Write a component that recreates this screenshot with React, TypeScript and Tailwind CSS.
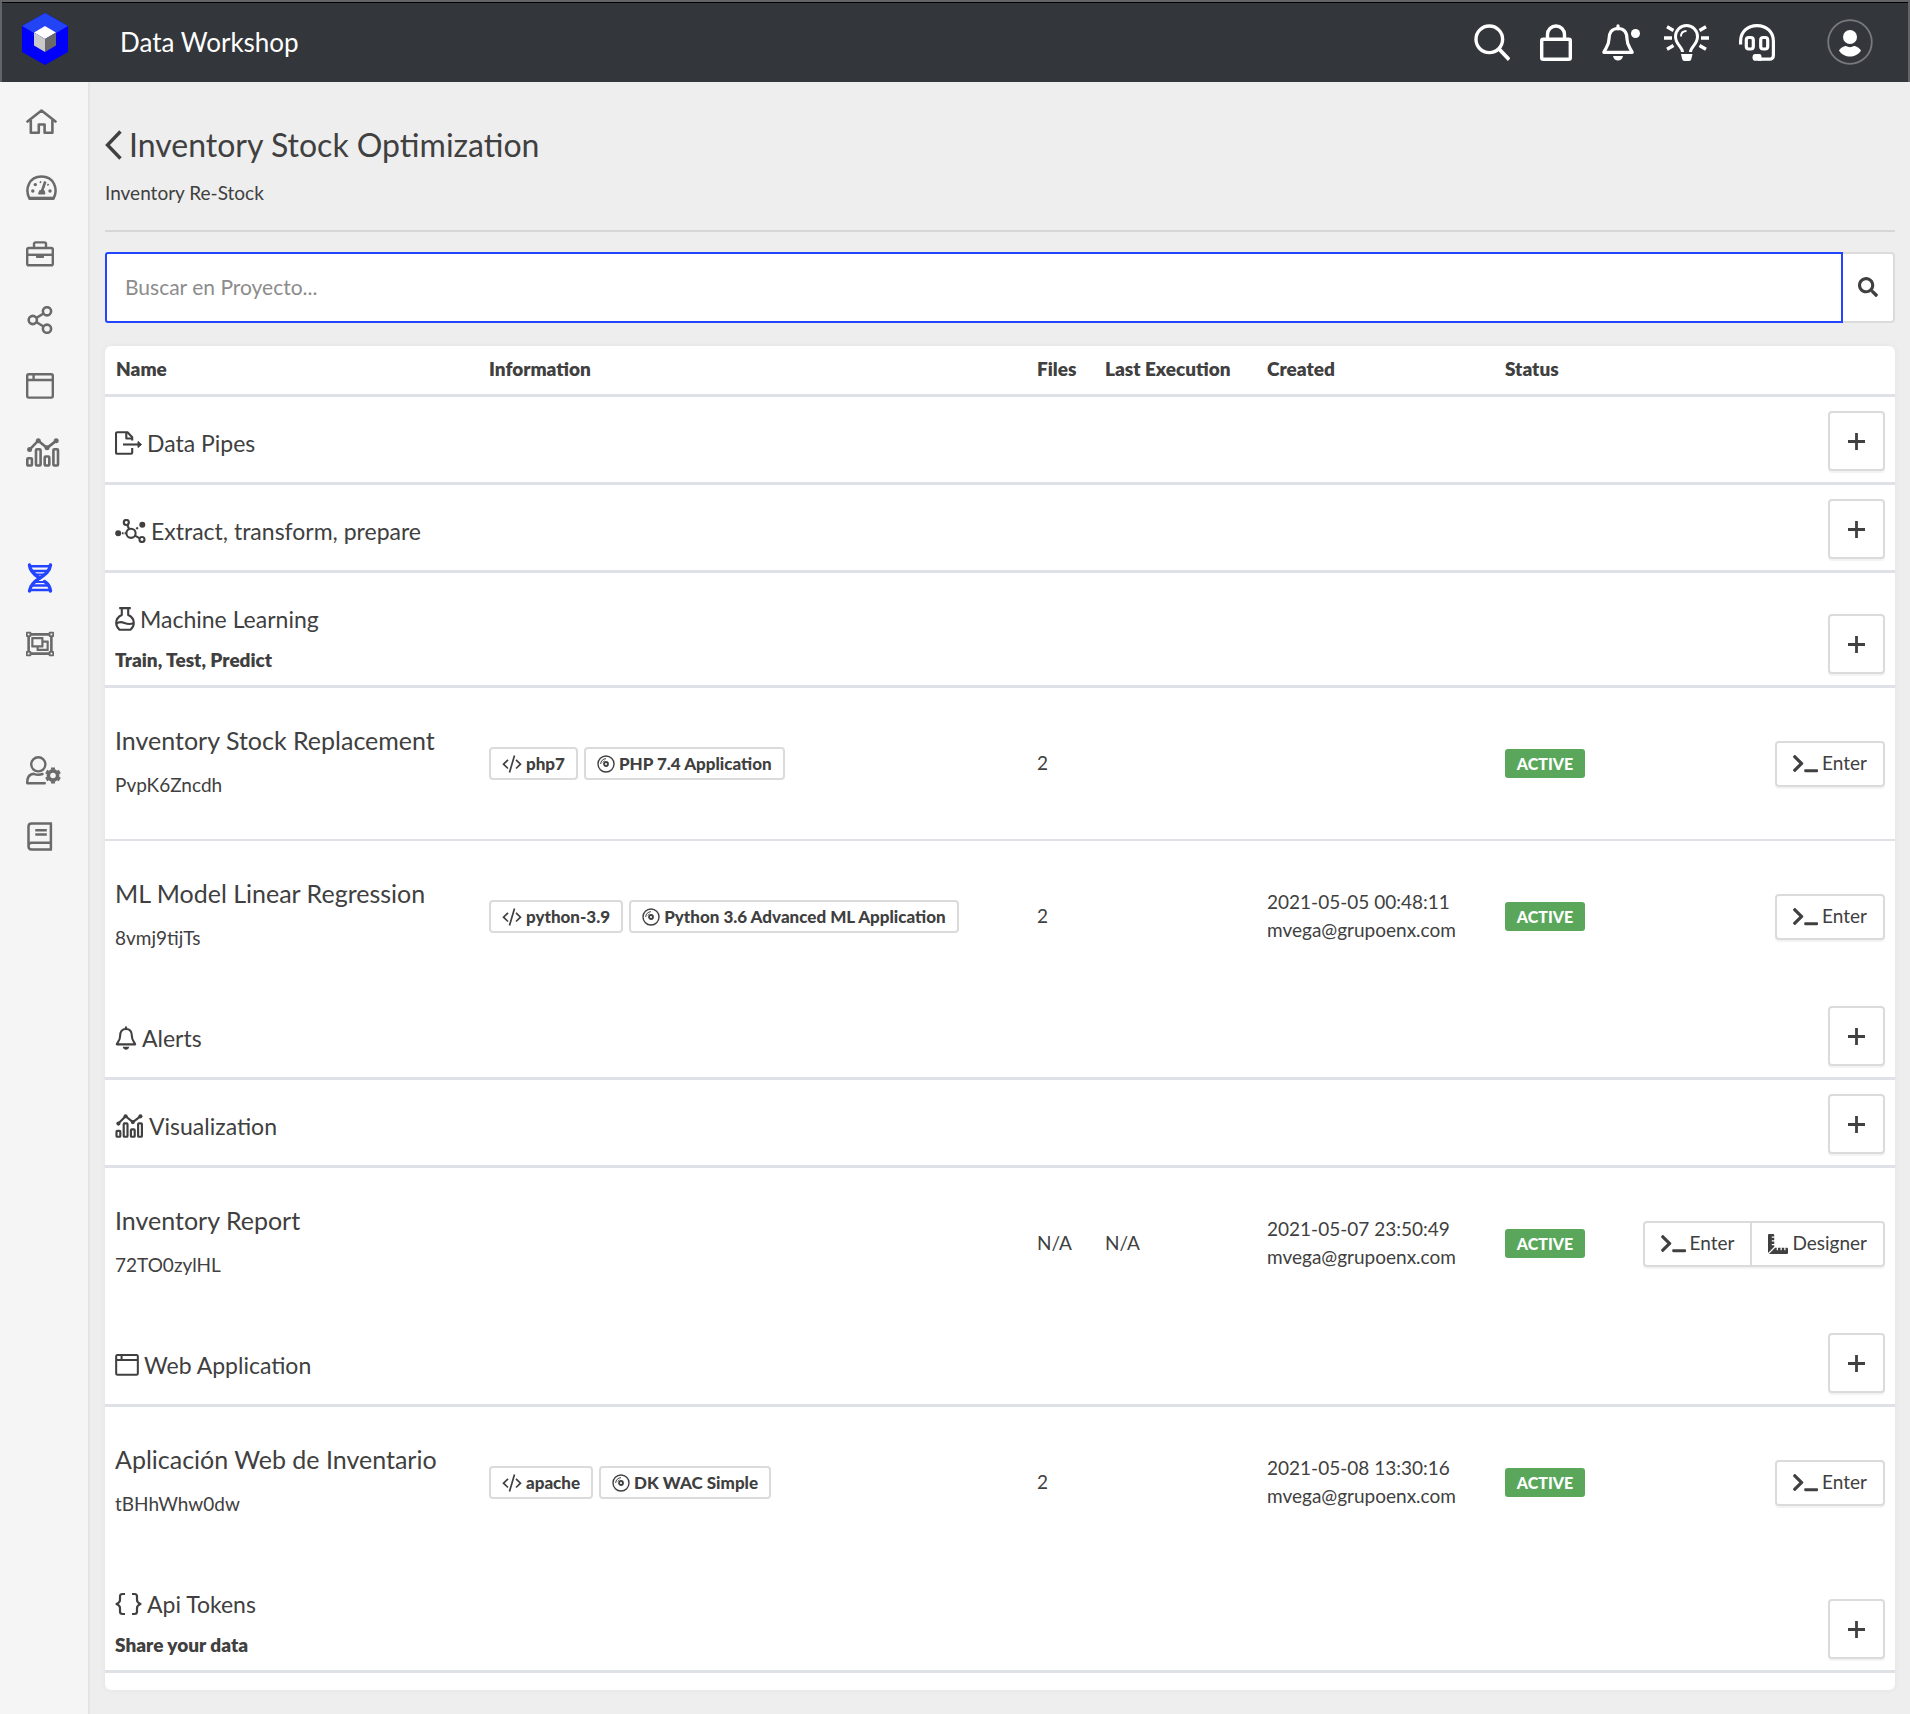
import { ReactNode, useState } from "react";
import { FaRegObjectGroup, FaRulerCombined, FaSearch, FaTerminal } from "react-icons/fa"

type IconProps = { className?: string }

type Item = {
    name: string
    id: string
    tags?: string[]
    files: string
    lastExecution?: string
    created?: string[]
    designer?: boolean
}

type Section = {
    title: string
    subtitle?: string
    icon: ReactNode
    items: Item[]
}

// ---------- icons ----------

function HomeIcon() {
    return (
        <svg width="32" height="26" viewBox="0 0 32 26" fill="none" stroke="currentColor" strokeWidth="2.6" strokeLinecap="round" strokeLinejoin="round">
            <path d="M1.5 12.5 15.5 1.5l14 11M4.8 11v12.8h8v-8.3h5.8v8.3h7.8V11" />
        </svg>
    )
}

function GaugeIcon() {
    return (
        <svg width="32" height="26" viewBox="0 0 32 26" fill="none" stroke="currentColor" strokeWidth="2.5" strokeLinejoin="round">
            <path d="M3.5 23.8C-1.5 14 3 1.5 15.5 1.5s17 12.5 12 22.3z" />
            <path d="M3 23.2h25" strokeWidth="3" />
            <path d="M19.3 6.5 16 16" strokeWidth="2.6" />
            <path d="m12.5 19 1.2-3.4h4.4L19 19z" fill="currentColor" strokeWidth="1" />
            <path d="M14.8 6.2 14.2 8M22.6 9l-1.2 1.6" strokeWidth="1.6" />
            <g fill="currentColor" stroke="none">
                <circle cx="6.8" cy="16" r="1.7" />
                <circle cx="24" cy="16" r="1.7" />
                <circle cx="9.3" cy="9.6" r="1.7" />
            </g>
        </svg>
    )
}

function BriefcaseIcon() {
    return (
        <svg width="28" height="26" viewBox="0 0 28 26" fill="none" stroke="currentColor" strokeWidth="2.4" strokeLinejoin="round">
            <path d="M8 7V3q0-1.6 1.6-1.6h8.8Q20 1.4 20 3v4" />
            <rect x="1.2" y="7" width="25.6" height="17.3" rx="1.6" />
            <path d="M1.2 13.8h25.6" />
            <path d="M10.5 14h7v2.5h-7z" fill="currentColor" strokeWidth="1" />
        </svg>
    )
}

function ShareIcon() {
    return (
        <svg width="28" height="28" viewBox="0 0 28 28" fill="none" stroke="currentColor" strokeWidth="2.6">
            <circle cx="6.8" cy="14" r="4.1" />
            <circle cx="21" cy="5.3" r="4.1" />
            <circle cx="21" cy="22.7" r="4.1" />
            <path d="m10.3 12 7.2-4.5M10.3 16l7.2 4.5" />
        </svg>
    )
}

function WindowIcon({ className = "h-[26px] w-7" }: IconProps) {
    return (
        <svg className={className} viewBox="0 0 28 26" fill="none" stroke="currentColor" strokeWidth="2.4" strokeLinejoin="round">
            <rect x="1.2" y="1.2" width="25.6" height="23.4" rx="1.6" />
            <path d="M1.2 7h25.6M7.6 2v5" />
        </svg>
    )
}

function ChartIcon({ className = "h-[29px] w-[34px]" }: IconProps) {
    return (
        <svg className={className} viewBox="0 0 34 29" fill="none" stroke="currentColor" strokeWidth="2.6" strokeLinejoin="round">
            <rect x="1.3" y="20.3" width="4.6" height="7.2" rx="1" />
            <rect x="10" y="11.3" width="4.6" height="16.2" rx="1" />
            <rect x="18.7" y="18.5" width="4.6" height="9" rx="1" />
            <rect x="27.4" y="11.3" width="4.6" height="16.2" rx="1" />
            <path d="m3.8 11.3 8.5-8.6 8.8 7.2 9-7" />
            <g fill="currentColor" stroke="none">
                <circle cx="3.6" cy="11.6" r="2.5" />
                <circle cx="12.3" cy="2.7" r="2.5" />
                <circle cx="21" cy="9.8" r="2.5" />
                <circle cx="30.2" cy="2.8" r="2.5" />
            </g>
        </svg>
    )
}

function DnaIcon() {
    return (
        <svg width="28" height="30" viewBox="0 0 28 30" fill="none" stroke="currentColor" strokeWidth="3.4" strokeLinecap="round">
            <path d="M24.500 2C23.500 9 18.500 12 14 15s-9.500 6-10.500 13" />
            <path d="M3.500 2C4 8 7.500 11 12.500 14.200M18.500 18.500C22 20.500 24 23 24.500 28" />
            <path d="M4.500 3.300h19M6.500 8h15M6.500 22.500h15M4.500 27h19" strokeWidth="2.600" />
            <path d="M10 11.500h8M9.500 19h9" strokeWidth="1.800" />
        </svg>
    )
}

function UserCogIcon() {
    return (
        <svg width="36" height="29" viewBox="0 0 36 29" fill="none" stroke="currentColor" strokeWidth="2.400" strokeLinecap="round" strokeLinejoin="round">
            <circle cx="12.300" cy="8.300" r="7.100" />
            <path d="M16.500 18c-2.700 1-6 .9-8.800-.2C3.500 18.200 1 21.500 1.200 27.200h17.600" />
            <circle cx="27" cy="19.500" r="4.600" strokeWidth="3.600" />
            <path d="M27 11.600v2M27 25.400v2M20.200 15.500l1.700 1M32.100 22.500l1.700 1M20.200 23.500l1.700-1M32.100 16.500l1.700-1" strokeWidth="4" strokeLinecap="butt" />
        </svg>
    )
}

function BookIcon() {
    return (
        <svg width="28" height="29" viewBox="0 0 28 29" fill="none" stroke="currentColor" strokeWidth="2.500" strokeLinejoin="round">
            <path d="M26 1.500H5.600Q2.500 1.500 2.500 4.600v19.600q0 3.200 3.100 3.200H26M2.500 24.200q0-3.400 3.100-3.400h19.300M24.900 1.500v25.900" />
            <path d="M9.300 8.200h11.500M9.300 12.500h11.500" />
        </svg>
    )
}

function BellIcon({ className = "h-6 w-[22px]" }: IconProps) {
    return (
        <svg className={className} viewBox="0 0 32 37" fill="none" stroke="currentColor" strokeWidth="3.200" strokeLinejoin="round" overflow="visible">
            <path d="M16 4.500C9.500 4.500 7 9 7 15c0 7-3.500 9-5.200 13.300h28.400C28.500 24 25 22 25 15c0-6-2.500-10.500-9-10.500z" />
            <path d="M16 1.800v3" strokeLinecap="round" />
            <path d="M11 32h10c-1 6-9 6-10 0z" fill="currentColor" stroke="none" />
        </svg>
    )
}

function ExportIcon() {
    return (
        <svg width="27" height="24" viewBox="0 0 27 24" fill="none" stroke="currentColor" strokeWidth="2.100" strokeLinejoin="round">
            <path d="M17.200 9.500V6.200L12.500 1.200H2.200Q1 1.200 1 2.400v19.200q0 1.200 1.200 1.200H16q1.200 0 1.200-1.200V17" />
            <path d="M11.300 1.500v6h5.600" />
            <path d="M8 13.500h16" />
            <path d="m23 10.500 3.500 3-3.500 3z" fill="currentColor" strokeWidth="1" />
        </svg>
    )
}

function MoleculeIcon() {
    return (
        <svg width="31" height="24" viewBox="0 0 31 24" fill="none" stroke="currentColor" strokeWidth="2.100">
            <circle cx="16" cy="14.300" r="4.600" />
            <circle cx="11.300" cy="3.500" r="2.500" />
            <circle cx="27" cy="20.500" r="2.500" />
            <path d="m12.200 5.800 1.900 4.200M20 16.600l4.800 2.700M7 14.300h1.600M9.600 14.300h1.600M21.300 10l1.600-1.500" />
            <circle cx="3.200" cy="14.300" r="3" fill="currentColor" stroke="none" />
            <circle cx="27.300" cy="5.800" r="3" fill="currentColor" stroke="none" />
        </svg>
    )
}

function FlaskIcon() {
    return (
        <svg width="20" height="24" viewBox="0 0 20 24" fill="none" stroke="currentColor" strokeWidth="2.100" strokeLinejoin="round">
            <path d="M4.200 1.100h11.600M6.800 1.100V8C3.500 9.500 1.200 12.300 1.200 16c0 3 1.300 5 3.300 6.800h11c2-1.800 3.300-3.800 3.300-6.800 0-3.700-2.300-6.500-5.600-8V1.100" />
            <path d="M1.500 16.500c3-2.200 5.500-1.500 8-.5s5.500 1.500 9 .3" />
        </svg>
    )
}

function BracesIcon() {
    return (
        <svg width="27" height="24" viewBox="0 0 27 24" fill="none" stroke="currentColor" strokeWidth="2.200" strokeLinejoin="round">
            <path d="M10 2H7.500Q5 2 5 4.500V8q0 2.500-3.500 4Q5 13.500 5 16v3.500Q5 22 7.500 22H10" />
            <path d="M17 2h2.500Q22 2 22 4.500V8q0 2.500 3.500 4-3.500 1.500-3.500 4v3.500q0 2.500-2.500 2.500H17" />
        </svg>
    )
}

function CodeIcon() {
    return (
        <svg width="20" height="18" viewBox="0 0 20 18" fill="none" stroke="currentColor" strokeWidth="1.700">
            <path d="M6 4.800 1.500 9.200 6 13.500M14 4.800l4.500 4.400-4.500 4.300M12.500.5l-5 17" />
        </svg>
    )
}

function DiscIcon() {
    return (
        <svg width="18" height="18" viewBox="0 0 18 18" fill="none" stroke="currentColor" strokeWidth="1.400">
            <circle cx="9" cy="9" r="8" />
            <circle cx="9" cy="9" r="2" strokeWidth="1.800" />
            <path d="M3.700 9A5.300 5.300 0 0 1 9 3.700M5.900 7.500A3.500 3.500 0 0 1 7.500 5.900" strokeWidth="1" />
        </svg>
    )
}

function Logo() {
    return (
        <svg width="46" height="52" viewBox="0 0 46 52">
            <path d="M23 0 46 13v26L23 52 0 39V13z" fill="#0000fb" />
            <path d="M23 0 46 13 34 20 23 13 12 20 0 13z" fill="#2244f5" />
            <path d="m23 13 11 6.500L23 26l-11-6.500z" fill="#fff" />
            <path d="m12 19.500 11 6.500v13l-11-6.500z" fill="#c9c9c9" />
            <path d="M34 19.500 23 26v13l11-6.500z" fill="#6a6a6a" />
        </svg>
    )
}

// ---------- data ----------

const navGroups = [
    [
        { label: "Home", icon: <HomeIcon /> },
        { label: "Dashboard", icon: <GaugeIcon /> },
        { label: "Projects", icon: <BriefcaseIcon /> },
        { label: "Share", icon: <ShareIcon /> },
        { label: "Web", icon: <WindowIcon /> },
        { label: "Visualization", icon: <ChartIcon /> },
    ],
    [
        { label: "Workshop", icon: <DnaIcon />, active: true },
        { label: "Objects", icon: <FaRegObjectGroup size={28} /> },
    ],
    [
        { label: "Users", icon: <UserCogIcon /> },
        { label: "Docs", icon: <BookIcon /> },
    ],
]

const sections: Section[] = [
    { title: "Data Pipes", icon: <ExportIcon />, items: [] },
    { title: "Extract, transform, prepare", icon: <MoleculeIcon />, items: [] },
    {
        title: "Machine Learning",
        subtitle: "Train, Test, Predict",
        icon: <FlaskIcon />,
        items: [
            { name: "Inventory Stock Replacement", id: "PvpK6Zncdh", tags: ["php7", "PHP 7.4 Application"], files: "2" },
            { name: "ML Model Linear Regression", id: "8vmj9tijTs", tags: ["python-3.9", "Python 3.6 Advanced ML Application"], files: "2", created: ["2021-05-05 00:48:11", "mvega@grupoenx.com"] },
        ],
    },
    { title: "Alerts", icon: <BellIcon />, items: [] },
    {
        title: "Visualization",
        icon: <ChartIcon className="h-6 w-[29px]" />,
        items: [
            { name: "Inventory Report", id: "72TO0zylHL", files: "N/A", lastExecution: "N/A", created: ["2021-05-07 23:50:49", "mvega@grupoenx.com"], designer: true },
        ],
    },
    {
        title: "Web Application",
        icon: <WindowIcon className="h-[22px] w-6" />,
        items: [
            { name: "Aplicación Web de Inventario", id: "tBHhWhw0dw", tags: ["apache", "DK WAC Simple"], files: "2", created: ["2021-05-08 13:30:16", "mvega@grupoenx.com"] },
        ],
    },
    { title: "Api Tokens", subtitle: "Share your data", icon: <BracesIcon />, items: [] },
]

// ---------- page parts ----------

function Header() {
    return (
        <header className="flex h-[82px] items-center border-x-2 border-t-2 border-[#626468] bg-[#33363b] pr-[35px] pl-5 text-white shadow-[inset_0_1px_0_#000]">
            <a href="#" aria-label="Data Workshop" className="-mt-1.5"><Logo /></a>
            <span className="ml-[52px] text-[26px]">Data Workshop</span>
            <div className="ml-auto flex items-center gap-[30px]">
                <button type="button" aria-label="Search">
                    <svg width="36" height="37" viewBox="0 0 36 37" fill="none" stroke="currentColor" strokeWidth="3.400">
                        <circle cx="15.300" cy="15.300" r="13.300" />
                        <path d="m24.800 24.800 10.400 10.800" strokeWidth="3.800" />
                    </svg>
                </button>
                <button type="button" aria-label="Lock">
                    <svg width="32" height="37" viewBox="0 0 32 37" fill="none" stroke="currentColor" strokeWidth="3.400" strokeLinejoin="round">
                        <rect x="1.700" y="15.300" width="28.600" height="20" rx="1.500" />
                        <path d="M7.500 15v-4.500a8.500 8.500 0 0 1 17 0V15" />
                    </svg>
                </button>
                <button type="button" aria-label="Notifications" className="relative">
                    <BellIcon className="h-[37px] w-8" />
                    <span className="absolute top-[5px] -right-1.5 size-[9px] rounded-full bg-white" />
                </button>
                <button type="button" aria-label="Tips">
                    <svg width="45" height="37" viewBox="0 0 45 37" fill="none" stroke="currentColor" strokeWidth="3">
                        <path d="M18.500 28c0-5-7-7.500-7-15.500a11 11 0 0 1 22 0c0 8-7 10.500-7 15.500" />
                        <path d="M17 12.500c0-3.300 2.200-5.500 5.500-5.500" strokeWidth="1.800" />
                        <path d="M17 30h11.500l-1 4.500q-.5 2.500-2.500 2.500h-4.500q-2 0-2.500-2.500z" fill="currentColor" stroke="none" />
                        <path d="M0 14h8M37 14h8M3 2.800l6.500 3.700M42 2.800l-6.500 3.700M3 25.200l6.500-3.700M42 25.200l-6.500-3.700" strokeWidth="3.400" />
                    </svg>
                </button>
                <button type="button" aria-label="Support">
                    <svg width="36" height="37" viewBox="0 0 36 37" fill="none" stroke="currentColor" strokeWidth="3.200">
                        <path d="M1.600 20.500V17C1.600 8 8.500 1.600 18 1.600S34.400 8 34.400 17v14q0 4.200-4.200 4.200H19" />
                        <rect x="7.300" y="13.500" width="7" height="11.500" rx="2.500" />
                        <rect x="21.700" y="13.500" width="7" height="11.500" rx="2.500" />
                        <path d="M16.500 30h4q2 0 2 3v3.800h-6q-3 0-3-3.400t3-3.400z" fill="currentColor" stroke="none" />
                    </svg>
                </button>
                <button type="button" aria-label="Account" className="ml-[22px]">
                    <svg width="46" height="46" viewBox="0 0 46 46" fill="currentColor">
                        <circle cx="23" cy="23" r="21.800" fill="none" stroke="#77797c" strokeWidth="1.800" />
                        <circle cx="23" cy="18" r="7" />
                        <path d="M12 31.500c2.500-3.500 5.500-4.500 7-4.500 2.500 1.500 5.500 1.500 8 0 1.500 0 4.500 1 7 4.500-2.500 4-7 6-11 6s-8.500-2-11-6z" />
                    </svg>
                </button>
            </div>
        </header>
    )
}

function Sidebar() {
    return (
        <nav className="flex w-[90px] shrink-0 flex-col gap-[60px] border-r-2 border-[#e4e4e4] bg-[#f5f5f5] pt-[7px]">
            {navGroups.map((group, index) => (
                <ul key={index}>
                    {group.map((entry) => (
                        <li key={entry.label}>
                            <a href="#" aria-label={entry.label} className={entry.active ? "flex h-[66px] items-center pl-[26px] text-[#2244ff]" : "flex h-[66px] items-center pl-[26px] text-[#6a6a6a]"}>
                                {entry.icon}
                            </a>
                        </li>
                    ))}
                </ul>
            ))}
        </nav>
    )
}

function SectionRow({ section }: { section: Section }) {
    return (
        <tr className={section.subtitle ? "h-[115px]" : "h-[88px]"}>
            <th scope="rowgroup" colSpan={5} className="border-b-[3px] border-[#dee2e6] pt-[31px] pl-2.5 text-left align-top font-normal">
                <div className="flex items-center gap-[5px] text-[23px] leading-[30px]">
                    {section.icon}
                    {section.title}
                </div>
                {section.subtitle && <div className="mt-3 text-[19px] leading-7 font-extrabold">{section.subtitle}</div>}
            </th>
            <td className="border-b-[3px] border-[#dee2e6] pr-2.5 pb-[11px] text-right align-bottom">
                <button type="button" aria-label={`Add to ${section.title}`} className="inline-flex h-[60px] w-[57px] items-center justify-center rounded border-2 border-[#dbdbdb] bg-white align-bottom shadow-[0_2px_1px_rgba(0,0,0,0.05)]">
                    <svg width="17" height="17" viewBox="0 0 17 17" stroke="currentColor" strokeWidth="2.800">
                        <path d="M8.500 0v17M0 8.500h17" />
                    </svg>
                </button>
            </td>
        </tr>
    )
}

function ItemRow({ item, last }: { item: Item, last: boolean }) {
    return (
        <tr className={last ? "h-[151px]" : "h-[153px] [&>*]:border-b-2 [&>*]:border-[#dee2e6]"}>
            <th scope="row" className="pb-1.5 pl-2.5 text-left font-normal">
                <a href="#" className="block text-[25px] leading-9">{item.name}</a>
                <span className="mt-3 block leading-[30px]">{item.id}</span>
            </th>
            <td className="pl-[11px]">
                <div className="flex gap-1.5">
                    {item.tags?.map((tag, index) => (
                        <span key={tag} className="flex h-[33px] items-center gap-1 rounded border-2 border-[#dbdbdb] px-[11px] text-[17px] font-black whitespace-nowrap">
                            {index === 0 ? <CodeIcon /> : <DiscIcon />}
                            {tag}
                        </span>
                    ))}
                </div>
            </td>
            <td className="pl-[11px]">{item.files}</td>
            <td className="pl-[11px]">{item.lastExecution}</td>
            <td className="pb-0.5 pl-[11px] leading-7">
                {item.created?.map((line) => <div key={line}>{line}</div>)}
            </td>
            <td className="pr-2.5 pl-[11px]">
                <div className="flex items-center justify-between">
                    <span className="flex h-[29px] w-20 items-center justify-center rounded-[3px] bg-[#5aa75c] text-[16px] font-black text-white">ACTIVE</span>
                    <div className="flex rounded shadow-[0_2px_1px_rgba(0,0,0,0.05)]">
                        <button type="button" className={item.designer ? "flex h-[46px] items-center gap-1 rounded-l border-2 border-r-0 border-[#dbdbdb] bg-white px-4" : "flex h-[46px] items-center gap-1 rounded border-2 border-[#dbdbdb] bg-white px-4"}>
                            <FaTerminal size={25} />
                            Enter
                        </button>
                        {item.designer &&
                            <button type="button" className="flex h-[46px] items-center gap-1 rounded-r border-2 border-[#dbdbdb] bg-white px-4">
                                <FaRulerCombined size={20} />
                                Designer
                            </button>
                        }
                    </div>
                </div>
            </td>
        </tr>
    )
}

export default function App() {

    const [query, setQuery] = useState<string>("")

    return (
        <div className="flex min-h-screen flex-col bg-[#eeeeee] font-['Lato',sans-serif] text-[19px] text-[#404040]">
            <Header />
            <div className="flex grow">
                <Sidebar />
                <main className="min-w-0 grow px-[15px] pt-[43px] pb-6">

                    <h1 className="flex items-center gap-[7px] text-[32px] leading-10">
                        <a href="#" aria-label="Back">
                            <svg width="17" height="30" viewBox="0 0 17 30" fill="none" stroke="currentColor" strokeWidth="3.400">
                                <path d="M15.500 1.500 2.500 15l13 13.500" />
                            </svg>
                        </a>
                        Inventory Stock Optimization
                    </h1>
                    <p className="mt-[13px] leading-[30px]">Inventory Re-Stock</p>
                    <hr className="mt-[22px] border-t-2 border-[#d6d6d6]" />

                    <form className="mt-5 flex h-[71px]" onSubmit={(e) => e.preventDefault()}>
                        <input
                            type="text"
                            aria-label="Buscar en Proyecto"
                            placeholder="Buscar en Proyecto..."
                            value={query}
                            onChange={(e) => setQuery(e.target.value)}
                            className="min-w-0 grow rounded-l-[3px] border-2 border-[#2244ff] bg-white px-[18px] pb-0.5 text-[21px] outline-none placeholder:text-[#8c8c8c]"
                        />
                        <button type="submit" aria-label="Buscar" className="flex w-[52px] items-center justify-center rounded-r border-y-2 border-r-2 border-[#dbdbdb] bg-white pb-0.5">
                            <FaSearch size={20} />
                        </button>
                    </form>

                    <div className="mt-[23px] rounded-md bg-white pb-[17px] shadow-[0_0_6px_rgba(0,0,0,0.05)]">
                        <table className="w-full table-fixed border-separate border-spacing-0">
                            <colgroup>
                                <col className="w-[373px]" />
                                <col className="w-[548px]" />
                                <col className="w-[68px]" />
                                <col className="w-[162px]" />
                                <col className="w-[238px]" />
                                <col />
                            </colgroup>
                            <thead>
                                <tr className="h-[51px]">
                                    {["Name", "Information", "Files", "Last Execution", "Created", "Status"].map((label) => (
                                        <th key={label} scope="col" className="border-b-[3px] border-[#dee2e6] pb-0.5 pl-[11px] text-left font-extrabold whitespace-nowrap">{label}</th>
                                    ))}
                                </tr>
                            </thead>
                            {sections.map((section) => (
                                <tbody key={section.title}>
                                    <SectionRow section={section} />
                                    {section.items.map((item, index) => (
                                        <ItemRow key={item.id} item={item} last={index === section.items.length - 1} />
                                    ))}
                                </tbody>
                            ))}
                        </table>
                    </div>

                </main>
            </div>
        </div>
    )
}
